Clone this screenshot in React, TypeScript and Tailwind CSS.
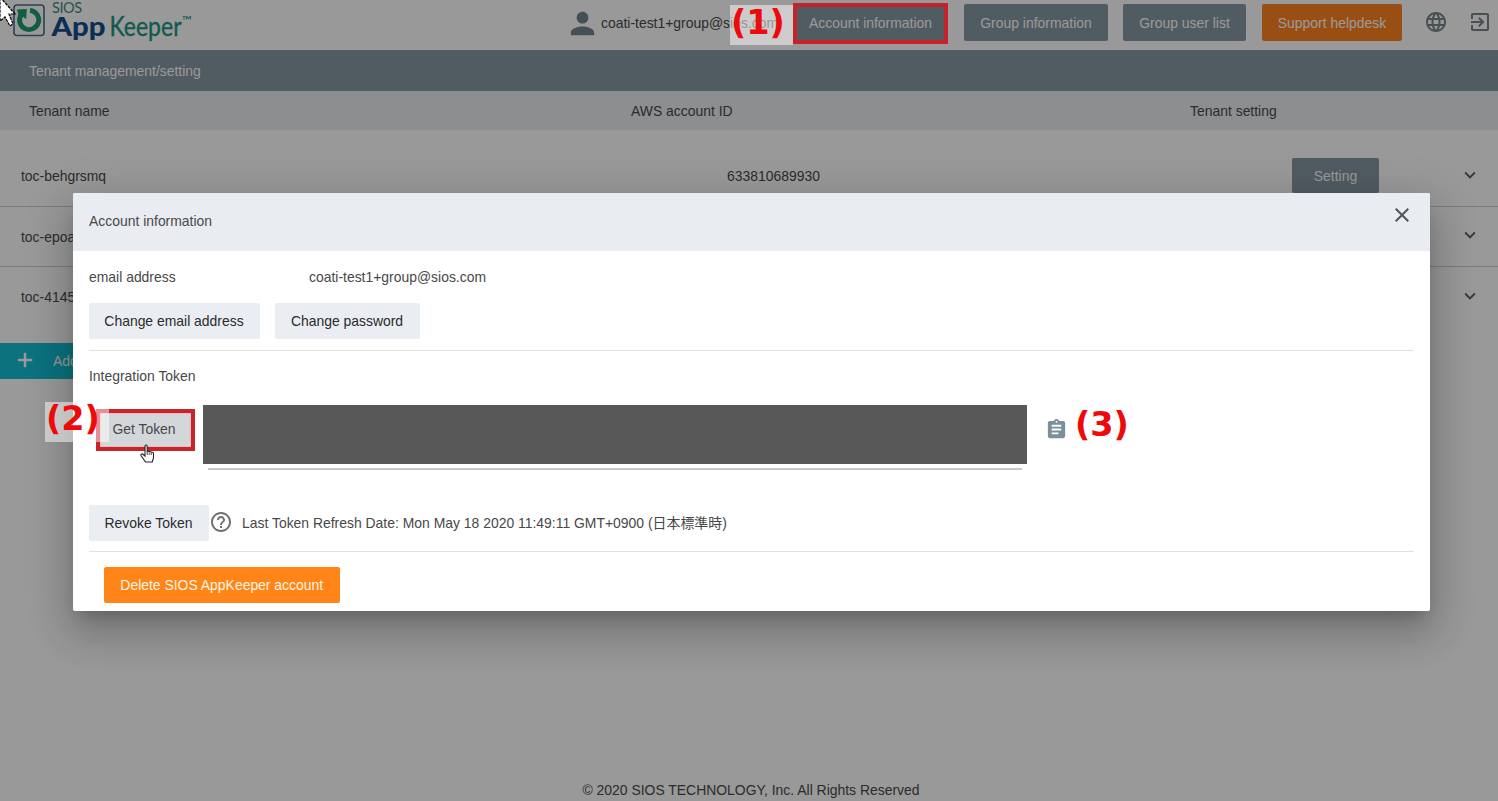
import type { ReactNode } from "react";

const navButtons = [
  { label: "Account information", cls: "w-[153px] bg-[#8799a3]" },
  { label: "Group information", cls: "ml-[17px] w-[144px] bg-[#8799a3]" },
  { label: "Group user list", cls: "ml-[15px] w-[123px] bg-[#8799a3]" },
  { label: "Support helpdesk", cls: "ml-4 w-[140px] bg-[#ff8420]" },
];

function Logo() {
  return (
    <svg width="200" height="50" viewBox="0 0 200 50" className="block shrink-0">
      <rect x="14" y="5" width="30" height="30.5" rx="3" fill="none" stroke="#4b6b92" strokeWidth="1.6" />
      <path d="M20.8 15.2A9.6 9.6 0 1 0 30 10.4" fill="none" stroke="#1c9c72" strokeWidth="4.8" />
      <path d="M17 9.6l9.8-.6-.6 10.2-3.2-2.4-3.6 1.8z" fill="#1c9c72" />
      <text x="52" y="13" fontFamily="Lato, sans-serif" fontSize="14.5" textLength="30" fill="#3b8d86">SIOS</text>
      <text x="51.5" y="36.3" fontFamily="Lato, sans-serif" fontWeight="900" fontSize="26" textLength="54" lengthAdjust="spacingAndGlyphs" fill="#164e8d">App</text>
      <text x="109.5" y="36.3" fontFamily="Lato, sans-serif" fontSize="26" textLength="72" lengthAdjust="spacingAndGlyphs" fill="#1b9480" stroke="#1b9480" strokeWidth=".3">Keeper</text>
      <text x="181.5" y="25" fontFamily="Lato, sans-serif" fontSize="13" textLength="10" lengthAdjust="spacingAndGlyphs" fill="#1b9480">™</text>
    </svg>
  );
}

function Icon({ d, size, className = "" }: { d: string; size: number; className?: string }) {
  return (
    <svg width={size} height={size} viewBox="0 0 24 24" fill="currentColor" className={`block shrink-0 ${className}`}>
      <path d={d} />
    </svg>
  );
}

const paths = {
  person: "M12 12c2.21 0 4-1.79 4-4s-1.79-4-4-4-4 1.79-4 4 1.79 4 4 4zm0 2c-2.67 0-8 1.34-8 4v2h16v-2c0-2.66-5.33-4-8-4z",
  globe:
    "M11.99 2C6.47 2 2 6.48 2 12s4.47 10 9.99 10C17.52 22 22 17.52 22 12S17.52 2 11.99 2zm6.93 6h-2.95c-.32-1.25-.78-2.45-1.38-3.56 1.84.63 3.37 1.91 4.33 3.56zM12 4.04c.83 1.2 1.48 2.53 1.91 3.96h-3.82c.43-1.43 1.08-2.76 1.91-3.96zM4.26 14C4.1 13.36 4 12.69 4 12s.1-1.36.26-2h3.38c-.08.66-.14 1.32-.14 2 0 .68.06 1.34.14 2H4.26zm.82 2h2.95c.32 1.25.78 2.45 1.38 3.56-1.84-.63-3.37-1.9-4.33-3.56zm2.95-8H5.08c.96-1.66 2.49-2.93 4.33-3.56C8.81 5.55 8.35 6.75 8.03 8zM12 19.96c-.83-1.2-1.48-2.53-1.91-3.96h3.82c-.43 1.43-1.08 2.76-1.91 3.96zM14.34 14H9.66c-.09-.66-.16-1.32-.16-2 0-.68.07-1.35.16-2h4.68c.09.65.16 1.32.16 2 0 .68-.07 1.34-.16 2zm.25 5.56c.6-1.11 1.06-2.31 1.38-3.56h2.95c-.96 1.65-2.49 2.93-4.33 3.56zM16.36 14c.08-.66.14-1.32.14-2 0-.68-.06-1.34-.14-2h3.38c.16.64.26 1.31.26 2s-.1 1.36-.26 2h-3.38z",
  exit: "M10.09 15.59L11.5 17l5-5-5-5-1.41 1.41L12.67 11H3v2h9.67l-2.58 2.59zM19 3H5c-1.11 0-2 .9-2 2v4h2V5h14v14H5v-4H3v4c0 1.1.89 2 2 2h14c1.1 0 2-.9 2-2V5c0-1.1-.9-2-2-2z",
  chevron: "M7.41 8.59L12 13.17l4.59-4.58L18 10l-6 6-6-6z",
  close: "M19 6.41L17.59 5 12 10.59 6.41 5 5 6.41 10.59 12 5 17.59 6.41 19 12 13.41 17.59 19 19 17.59 13.41 12z",
  plus: "M19 13h-6v6h-2v-6H5v-2h6V5h2v6h6v2z",
  clipboard:
    "M19 3h-4.18C14.4 1.84 13.3 1 12 1c-1.3 0-2.4.84-2.82 2H5c-1.1 0-2 .9-2 2v14c0 1.1.9 2 2 2h14c1.1 0 2-.9 2-2V5c0-1.1-.9-2-2-2zm-7 0c.55 0 1 .45 1 1s-.45 1-1 1-1-.45-1-1 .45-1 1-1zm2 14H7v-2h7v2zm3-4H7v-2h10v2zm0-4H7V7h10v2z",
  help: "M11 18h2v-2h-2v2zm1-16C6.48 2 2 6.48 2 12s4.48 10 10 10 10-4.48 10-10S17.52 2 12 2zm0 18c-4.41 0-8-3.59-8-8s3.59-8 8-8 8 3.59 8 8-3.59 8-8 8zm0-14c-2.21 0-4 1.79-4 4h2c0-1.1.9-2 2-2s2 .9 2 2c0 2-3 1.75-3 5h2c0-2.25 3-2.5 3-5 0-2.21-1.79-4-4-4z",
};

function TenantRow({ name, id, last }: { name: string; id?: string; last?: boolean }) {
  return (
    <div className={`flex h-[60.5px] items-center ${last ? "" : "border-b border-[#d0d0d0]"}`}>
      <span className={`w-[706px] pl-[21px] ${last ? "" : "pt-0.5"}`}>{name}</span>
      <span className="w-[586px] pt-0.5 pl-[21px]">{id}</span>
      <span className="flex h-[35px] w-[87px] items-center justify-center rounded-xs bg-[#8799a3] pt-0.5 text-white">Setting</span>
      <Icon d={paths.chevron} size={22} className="mr-[17px] mb-0.5 ml-auto text-[#606060]" />
    </div>
  );
}

function GreyButton({ children, className }: { children: ReactNode; className: string }) {
  return (
    <button className={`flex h-[36px] items-center justify-center rounded-xs bg-[#eaeef2] pt-px pr-px text-[#2b2b2b] ${className}`}>{children}</button>
  );
}

function AccountDialog() {
  return (
    <section className="absolute top-[193px] left-[73px] flex h-[418px] w-[1357px] flex-col rounded-xs bg-white text-[#484848] shadow-[0_11px_15px_-7px_rgba(0,0,0,0.2),0_24px_38px_3px_rgba(0,0,0,0.14),0_9px_46px_8px_rgba(0,0,0,0.12)]">
      <header className="flex h-[58px] shrink-0 justify-between rounded-t-xs bg-[#e9edf1] pr-4 pl-4">
        <h2 className="pt-[18px] leading-5">Account information</h2>
        <Icon d={paths.close} size={24} className="mt-2.5 text-[#505559]" />
      </header>
      <div className="mx-4 flex h-[100px] flex-col border-b border-[#e2e2e2] pt-4">
        <div className="flex h-5 items-center leading-5">
          <span className="w-[220px]">email address</span>
          <span>coati-test1+group@sios.com</span>
        </div>
        <div className="mt-[16px] flex gap-[15px]">
          <GreyButton className="w-[171px]">Change email address</GreyButton>
          <GreyButton className="w-[145px]">Change password</GreyButton>
        </div>
      </div>
      <div className="mx-4 flex h-[201px] flex-col border-b border-[#e2e2e2] pt-[15px]">
        <div className="leading-5">Integration Token</div>
        <div className="mt-[19px] flex h-[65px]">
          <button className="mt-[4px] ml-[7px] flex h-[42px] w-[99px] items-center justify-center border-4 border-[#c9232c] bg-[#d3d7da] pr-[3px] pb-px text-[#484848] inset-ring-1 inset-ring-[#efb9be]">
            Get Token
          </button>
          <div className="ml-2 w-[824px]">
            <div className="h-[59px] bg-[#585858]" />
            <div className="mx-[5px] mt-1 h-[2px] bg-[#c8c8c8]" />
          </div>
          <Icon d={paths.clipboard} size={23} className="mt-[13px] ml-[18px] text-[#78909c]" />
        </div>
        <div className="mt-[35px] flex h-[36px] items-center">
          <GreyButton className="w-[120px]">Revoke Token</GreyButton>
          <Icon d={paths.help} size={24} className="mb-[3px] text-[#707070]" />
          <span className="ml-[9px] pt-px">Last Token Refresh Date: Mon May 18 2020 11:49:11 GMT+0900 (日本標準時)</span>
        </div>
      </div>
      <button className="mt-[15px] ml-[31px] flex h-[36px] w-[235.5px] items-center justify-center rounded-xs bg-[#ff8518] text-[#fff6e5]">
        Delete SIOS AppKeeper account
      </button>
    </section>
  );
}

export default function App() {
  return (
    <div className="relative h-[801px] w-[1498px] overflow-hidden bg-white font-['Liberation_Sans','Noto_Sans_CJK_JP',sans-serif] text-[13.93px] text-[#4a4a4a]">
      <div className="flex h-full flex-col">
        <header className="flex h-[50px] shrink-0">
          <Logo />
          <div className="ml-[365px] flex h-[46px] w-[229px] items-center">
            <Icon d={paths.person} size={35} className="text-[#71868f]" />
            <span className="pt-px pl-px whitespace-nowrap">coati-test1+group@sios.com</span>
          </div>
          <nav className="flex h-[45px] items-center">
            {navButtons.map((b) => (
              <button key={b.label} className={`flex h-[37px] items-center justify-center rounded-xs pt-px text-white ${b.cls}`}>
                {b.label}
              </button>
            ))}
          </nav>
          <Icon d={paths.globe} size={24} className="mt-[10px] ml-[22px] text-[#78858d]" />
          <Icon d={paths.exit} size={24} className="mt-[10px] ml-[20px] text-[#78858d]" />
        </header>
        <div className="flex h-[41px] shrink-0 items-center bg-[#8799a3] pt-px pl-[29px] text-white">Tenant management/setting</div>
        <div className="flex h-[39px] shrink-0 items-center bg-[#e9edf1] pt-px pl-[29px]">
          <span className="w-[602px]">Tenant name</span>
          <span className="w-[559px]">AWS account ID</span>
          <span>Tenant setting</span>
        </div>
        <div className="mt-4">
          <TenantRow name="toc-behgrsmq" id="633810689930" />
          <TenantRow name="toc-epoa" />
          <TenantRow name="toc-4145" last />
        </div>
        <button className="mt-[15px] flex h-[36px] w-[130px] items-center bg-[#13bfd2] text-white">
          <Icon d={paths.plus} size={24} className="mb-0.5 ml-[13px] stroke-current stroke-[0.5]" />
          <span className="ml-[16px] pt-px">Add</span>
        </button>
        <footer className="mt-auto flex h-[21px] items-center justify-center pl-[4px]">© 2020 SIOS TECHNOLOGY, Inc. All Rights Reserved</footer>
      </div>
      <div className="absolute inset-0 bg-black/40" />
      <AccountDialog />
      <div className="absolute top-[3px] left-[793px] h-[41px] w-[155px] border-4 border-[#c5232c]" />
      <div className="absolute top-[5px] left-[730px] h-[40px] w-[63px] bg-white/50 pl-px font-['DejaVu_Sans'] text-[33.5px] leading-[35px] font-bold text-[#ee0a0a]">(1)</div>
      <div className="absolute top-[402px] left-[45px] h-[40px] w-[64px] bg-white/50 pl-px font-['DejaVu_Sans'] text-[33.5px] leading-[34px] font-bold text-[#ee0a0a]">(2)</div>
      <div className="absolute top-[407px] left-[1075px] font-['DejaVu_Sans'] text-[33.5px] leading-[35px] font-bold text-[#ee0a0a]">(3)</div>
      <svg className="absolute top-0 left-0" width="18" height="28" viewBox="0 0 18 28">
        <path d="M0-3L15 14H9l4 10-3 2-5-9-5 4z" fill="white" stroke="black" strokeWidth="1.2" strokeDasharray="3 1" />
      </svg>
      <svg className="absolute top-[444px] left-[140px]" width="16" height="20" viewBox="0 0 16 20">
        <path d="M5 12V2.5c0-2 2.2-2 2.2 0V8c0-1.2 2-1.2 2 .3 0-1.2 2-1 2 .5 0-1 2.3-.8 2.3.7V14l-1.3 4H5.5L1 11.5C.5 9.8 2.3 9.5 3.2 10.5z" fill="white" stroke="#222" strokeWidth="1.1" />
        <path d="M7.2 8v3M9.2 8.5V11M11.2 9v2" stroke="#222" strokeWidth=".8" />
      </svg>
    </div>
  );
}
